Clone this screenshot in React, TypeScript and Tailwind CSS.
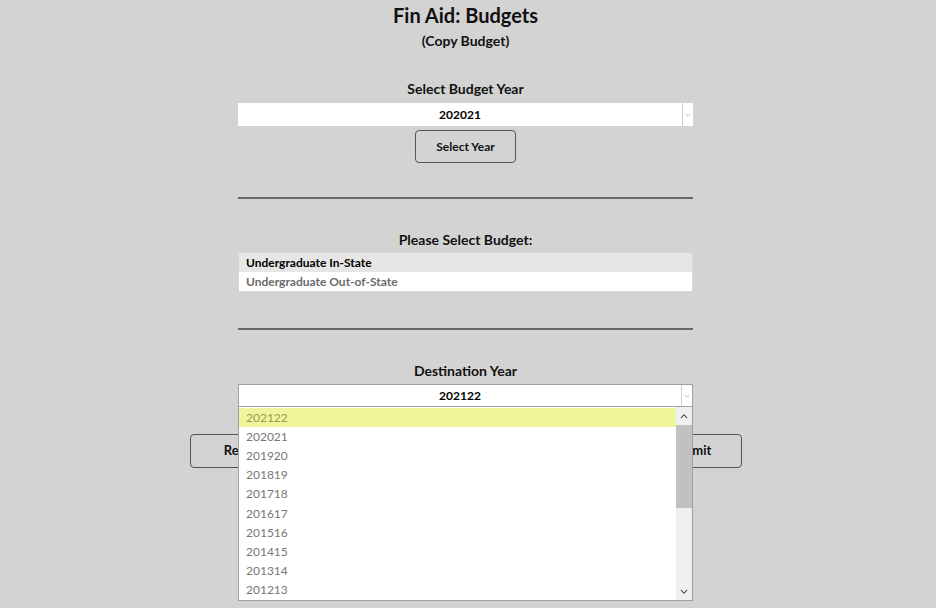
import React from 'react';

const years = ['202122', '202021', '201920', '201819', '201718', '201617', '201516', '201415', '201314', '201213'];

function Chevron({ className }: { className?: string }) {
  return (
    <svg viewBox="0 0 10 6" className={className} fill="none" stroke="currentColor" strokeWidth="1.4">
      <path d="M1 1l4 4 4-4" />
    </svg>
  );
}

function SelectBox({ value, bordered }: { value: string; bordered?: boolean }) {
  return (
    <div
      className={`flex h-[23px] w-full items-center bg-white ${bordered ? 'border border-[#a0a0a0]' : ''}`}
    >
      <div className="flex-1 pt-[1px] text-center text-[12px] font-bold text-black">{value}</div>
      <div className="flex h-full w-[11px] items-center justify-center border-l border-[#d0d0d0] text-[#aaa]">
        <Chevron className="h-[4px] w-[6px]" />
      </div>
    </div>
  );
}

export default function App() {
  return (
    <div
      className="min-h-[608px] w-full bg-[#d3d3d3] pr-[5px] text-[#111]"
      style={{ fontFamily: 'Lato, "DejaVu Sans", sans-serif' }}
    >
      <div className="flex flex-col items-center pt-[3px]">
        <h1 className="text-[20px] font-bold leading-[24px]">Fin Aid: Budgets</h1>
        <h2 className="mt-[5px] text-[14px] font-bold leading-[18px]">(Copy Budget)</h2>

        <div className="mt-[31px] flex w-[455px] flex-col items-center">
          <div className="text-[14px] font-bold leading-[16px]">Select Budget Year</div>
          <div className="mt-[6px] w-full">
            <SelectBox value="202021" />
          </div>
          <button className="mt-[4px] h-[33px] w-[101px] rounded-[4px] border border-[#555] bg-[#d3d3d3] text-[12px] font-bold">
            Select Year
          </button>

          <div className="mt-[34px] h-[2px] w-full bg-[#666]" />

          <div className="mt-[33px] text-[14px] font-bold leading-[16px]">Please Select Budget:</div>
          <div className="mt-[4px] w-full border border-[#d8d8d8] text-[12px] font-bold">
            <div className="flex h-[19px] items-center bg-[#e6e6e6] px-[7px] text-black">Undergraduate In-State</div>
            <div className="flex h-[19px] items-center bg-white px-[7px] text-[#6a6a6a]">Undergraduate Out-of-State</div>
          </div>

          <div className="mt-[36px] h-[2px] w-full bg-[#666]" />

          <div className="mt-[33px] text-[14px] font-bold leading-[16px]">Destination Year</div>
          <div className="relative mt-[5px] w-full">
            <SelectBox value="202122" bordered />
            <div className="absolute left-0 top-[23px] z-10 flex h-[194px] w-full border border-t-0 border-[#a0a0a0] bg-white">
              <div className="flex-1 overflow-hidden pt-[1px]">
                {years.map((y, i) => (
                  <div
                    key={y}
                    className={`flex h-[19.2px] items-center px-[7px] text-[12px] ${
                      i === 0 ? 'bg-[#eef59b] text-[#9a9a50]' : 'text-[#777]'
                    }`}
                  >
                    {y}
                  </div>
                ))}
              </div>
              <div className="flex w-[16px] flex-col bg-[#f0f0f0]">
                <div className="flex h-[18px] items-center justify-center text-[#555]">
                  <Chevron className="h-[5px] w-[8px] rotate-180" />
                </div>
                <div className="h-[83px] bg-[#c1c1c1]" />
                <div className="flex-1" />
                <div className="flex h-[18px] items-center justify-center text-[#555]">
                  <Chevron className="h-[5px] w-[8px]" />
                </div>
              </div>
            </div>
          </div>
        </div>

        <div className="mt-[27px] flex w-[552px] justify-between">
          <button className="h-[34px] w-[101px] rounded-[4px] border border-[#555] bg-[#d3d3d3] text-[13px] font-bold">
            Reset
          </button>
          <button className="h-[34px] w-[101px] rounded-[4px] border border-[#555] bg-[#d3d3d3] text-[13px] font-bold">
            Submit
          </button>
        </div>
      </div>
    </div>
  );
}
